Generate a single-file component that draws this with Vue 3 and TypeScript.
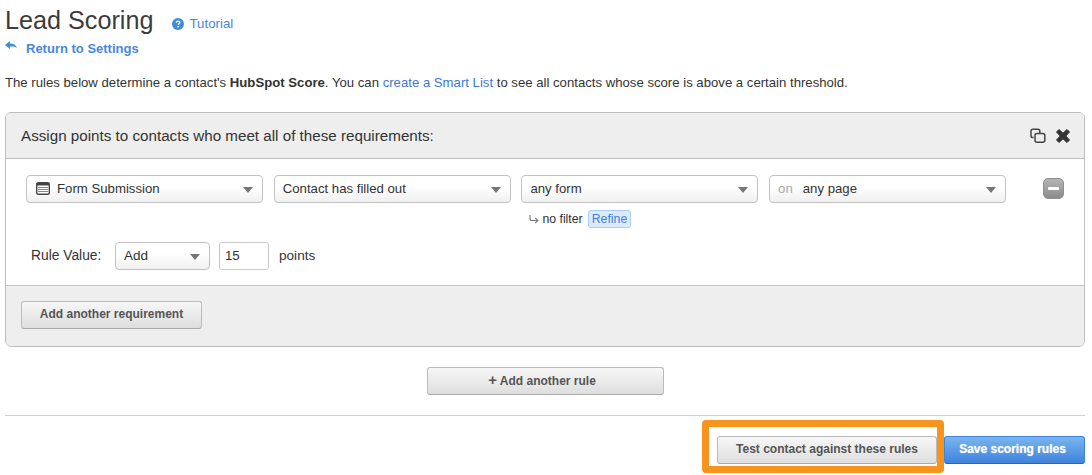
<script setup lang="ts">
interface Sel { label: string; prefix?: string; icon?: boolean }
const selects: Sel[] = [
  { label: 'Form Submission', icon: true },
  { label: 'Contact has filled out' },
  { label: 'any form' },
  { label: 'any page', prefix: 'on' },
]
</script>

<template>
  <div class="page">
    <div class="title-row">
      <h1 class="title">Lead Scoring</h1>
      <a class="tutorial">
        <svg class="help" viewBox="0 0 12 12" width="12" height="12">
          <circle cx="6" cy="6" r="6" fill="#3b8fdc" />
          <path d="M4.2 4.7C4.3 3.7 5 3.2 6 3.2c1.1 0 1.8.6 1.8 1.4 0 .7-.4 1-.9 1.3-.5.3-.7.5-.7 1" fill="none" stroke="#fff" stroke-width="1.3" />
          <rect x="5.4" y="8" width="1.5" height="1.4" fill="#fff" />
        </svg>
        Tutorial
      </a>
    </div>
    <div class="back-row">
      <svg class="back" viewBox="0 0 12 10" width="12" height="10">
        <path d="M0 4 L5 0 V2.4 C8.5 2.4 11 3.8 12 7 C10.4 5.5 8.2 5.3 5 5.4 V8 Z" fill="#3b8fdc" />
      </svg>
      <a class="back-link">Return to Settings</a>
    </div>
    <p class="intro">The rules below determine a contact's <b>HubSpot Score</b>. You can <a class="link">create a Smart List</a> to see all contacts whose score is above a certain threshold.</p>

    <section class="card">
      <header class="card-head">
        <span>Assign points to contacts who meet all of these requirements:</span>
        <div class="head-icons">
          <svg viewBox="0 0 16 16" width="16" height="16" fill="none" stroke="#444" stroke-width="1.5">
            <path d="M3.5 9.5H2.8A1.8 1.8 0 0 1 1 7.7V3A1.8 1.8 0 0 1 2.8 1.2H8A1.8 1.8 0 0 1 9.8 3V5" />
            <rect x="5" y="5.5" width="9.8" height="8.8" rx="2" />
          </svg>
          <svg viewBox="0 0 16 16" width="16" height="16">
            <path d="M1.5 4 4 1.5 8 5.2 12 1.5 14.5 4 10.8 8 14.5 12 12 14.5 8 10.8 4 14.5 1.5 12 5.2 8Z" fill="#333" stroke="#333" stroke-width="1" stroke-linejoin="round" />
          </svg>
        </div>
      </header>

      <div class="card-body">
        <div class="req-row">
          <div class="col" v-for="s in selects" :key="s.label">
            <div class="select">
              <svg v-if="s.icon" class="form-icon" viewBox="0 0 14 13" width="14" height="13">
                <rect x="0.7" y="0.7" width="12.6" height="11.6" rx="1.5" fill="#fff" stroke="#444" stroke-width="1.4" />
                <rect x="1" y="1" width="12" height="2.5" fill="#444" />
                <path d="M2 5.5H12M2 7.5H12M2 9.5H12" stroke="#777" stroke-width="0.9" />
              </svg>
              <span v-if="s.prefix" class="prefix">{{ s.prefix }}</span>
              <span class="sel-text">{{ s.label }}</span>
              <i class="caret"></i>
            </div>
            <div v-if="s.label === 'any form'" class="refine-row">
              <svg viewBox="0 0 10 9" width="10" height="9" fill="none" stroke="#777" stroke-width="1.1">
                <path d="M1 0V3.5C1 4.8 1.8 5.5 3 5.5H8.5M6.3 3 8.8 5.5 6.3 8" />
              </svg>
              <span>no filter</span>
              <span class="refine">Refine</span>
            </div>
          </div>
          <button class="minus" aria-label="Remove"><i></i></button>
        </div>
        <div class="value-row">
          <label class="value-label">Rule Value:</label>
          <div class="select small">
            <span class="sel-text">Add</span>
            <i class="caret"></i>
          </div>
          <div class="num">15</div>
          <span class="points">points</span>
        </div>
      </div>

      <footer class="card-foot">
        <button class="btn req">Add another requirement</button>
      </footer>
    </section>

    <div class="add-rule">
      <button class="btn rule"><span class="plus">+</span> Add another rule</button>
    </div>

    <div class="actions">
      <div class="test-wrap">
        <button class="btn test">Test contact against these rules</button>
        <div class="highlight"></div>
      </div>
      <button class="btn save">Save scoring rules</button>
    </div>
  </div>
</template>

<style>
html, body { margin: 0; background: #fff; }
</style>

<style scoped>
.page {
  width: 1080px;
  height: 475px;
  margin-left: 5px;
  overflow: hidden;
  font-family: "Liberation Sans", Arial, sans-serif;
  font-size: 13px;
  color: #333;
}
.title-row { display: flex; align-items: center; height: 40px; }
.title { margin: 0; font-size: 25.2px; font-weight: 400; line-height: 40px; color: #3c3c3c; }
.tutorial { display: flex; align-items: center; gap: 5px; margin-left: 19px; margin-top: 7px; color: #4a86d8; font-size: 13.3px; }
.back-row { display: flex; align-items: center; height: 17px; }
.back { margin-top: -5px; }
.back-link { margin-left: 9px; color: #4a86e0; font-weight: 700; font-size: 13px; }
.intro { margin: 18px 0 0; line-height: 16px; height: 16px; white-space: nowrap; font-size: 13.16px; }
.link { color: #3b78d8; }
.card {
  box-sizing: border-box;
  margin-top: 21px;
  height: 235px;
  border: 1px solid #bdbdbd;
  border-radius: 6px;
  overflow: hidden;
}
.card-head {
  box-sizing: border-box;
  height: 46px;
  display: flex;
  align-items: center;
  justify-content: space-between;
  padding: 0 13px 0 15px;
  background: #eee;
  border-bottom: 1px solid #bdbdbd;
  font-size: 15.2px;
  color: #333;
}
.head-icons { display: flex; gap: 9px; }
.card-body { box-sizing: border-box; height: 127px; padding: 16px 20px 0; border-bottom: 1px solid #c4c4c4; }
.req-row { display: flex; gap: 10.7px; align-items: flex-start; height: 67px; }
.col { width: 237px; flex: none; }
.select {
  box-sizing: border-box;
  height: 28px;
  display: flex;
  align-items: center;
  padding: 0 9px 2px 8px;
  border: 1px solid #c2c2c2;
  border-radius: 4px;
  background: linear-gradient(#fff 40%, #f0f0f0);
  font-size: 13.2px;
  color: #333;
}
.form-icon { margin: 0 7px 0 1px; flex: none; }
.prefix { color: #aaa; margin-right: 10px; }
.sel-text { flex: 1; white-space: nowrap; }
.caret { width: 0; height: 0; border-left: 5px solid transparent; border-right: 5px solid transparent; border-top: 6px solid #777; margin-top: 3px; }
.refine-row { display: flex; align-items: center; gap: 3px; margin: 7px 0 0 8px; font-size: 12.3px; height: 18px; color: #333; }
.refine {
  margin-left: 2px;
  padding: 0 3px;
  height: 16px;
  line-height: 16px;
  border: 1px solid #a9cdf3;
  border-radius: 3px;
  background: #dcebfb;
  color: #3f80d8;
}
.minus {
  flex: none;
  width: 21px;
  height: 21px;
  margin: 3px 0 0 26px;
  padding: 0;
  border: 1px solid #8f8f8f;
  border-radius: 5px;
  background: linear-gradient(#b4b4b4, #8c8c8c);
  display: flex;
  align-items: center;
  justify-content: center;
}
.minus i { width: 11px; height: 3px; background: #fff; border-radius: 1px; }
.value-row { display: flex; align-items: center; margin-left: 5px; height: 28px; }
.value-label { width: 84px; font-size: 13.8px; padding-bottom: 1px; }
.small { width: 95px; font-size: 13.5px; }
.num {
  box-sizing: border-box;
  width: 50px;
  height: 28px;
  margin-left: 9px;
  padding-left: 5px;
  line-height: 26px;
  border: 1px solid #c8c8c8;
  border-radius: 3px;
  font-size: 13.2px;
}
.points { margin-left: 10px; font-size: 13.6px; padding-bottom: 2px; }
.card-foot { height: 61px; background: #eee; padding: 15px 15px 0; box-sizing: border-box; }
.btn {
  box-sizing: border-box;
  height: 28px;
  padding: 0 0 2px;
  border: 1px solid #bbb;
  border-bottom-color: #aaa;
  border-radius: 3px;
  background: linear-gradient(#f7f7f7, #dedede);
  color: #555;
  font-family: inherit;
  font-size: 12px;
  font-weight: 700;
}
.req { width: 181px; }
.add-rule { display: flex; justify-content: center; margin-top: 20px; }
.rule { width: 237px; margin-left: 1px; padding-right: 7px; }
.plus { font-size: 15px; line-height: 1; }
.actions {
  display: flex;
  justify-content: flex-end;
  margin-top: 20px;
  padding-top: 20px;
  border-top: 1px solid #d2d2d2;
}
.test-wrap { position: relative; margin-right: 7px; }
.test { width: 220px; display: block; }
.highlight {
  position: absolute;
  left: -15px;
  top: -16px;
  width: 242px;
  height: 53px;
  box-sizing: border-box;
  border: 7px solid #f7941d;
  border-radius: 4px;
}
.save {
  width: 141px;
  padding-right: 4px;
  border: 1px solid #3f84dc;
  border-bottom-color: #1f66c8;
  background: linear-gradient(#7ab5ef, #3f83dd);
  color: #fff;
  text-shadow: 0 0 1px rgba(255,255,255,.7);
}
</style>
